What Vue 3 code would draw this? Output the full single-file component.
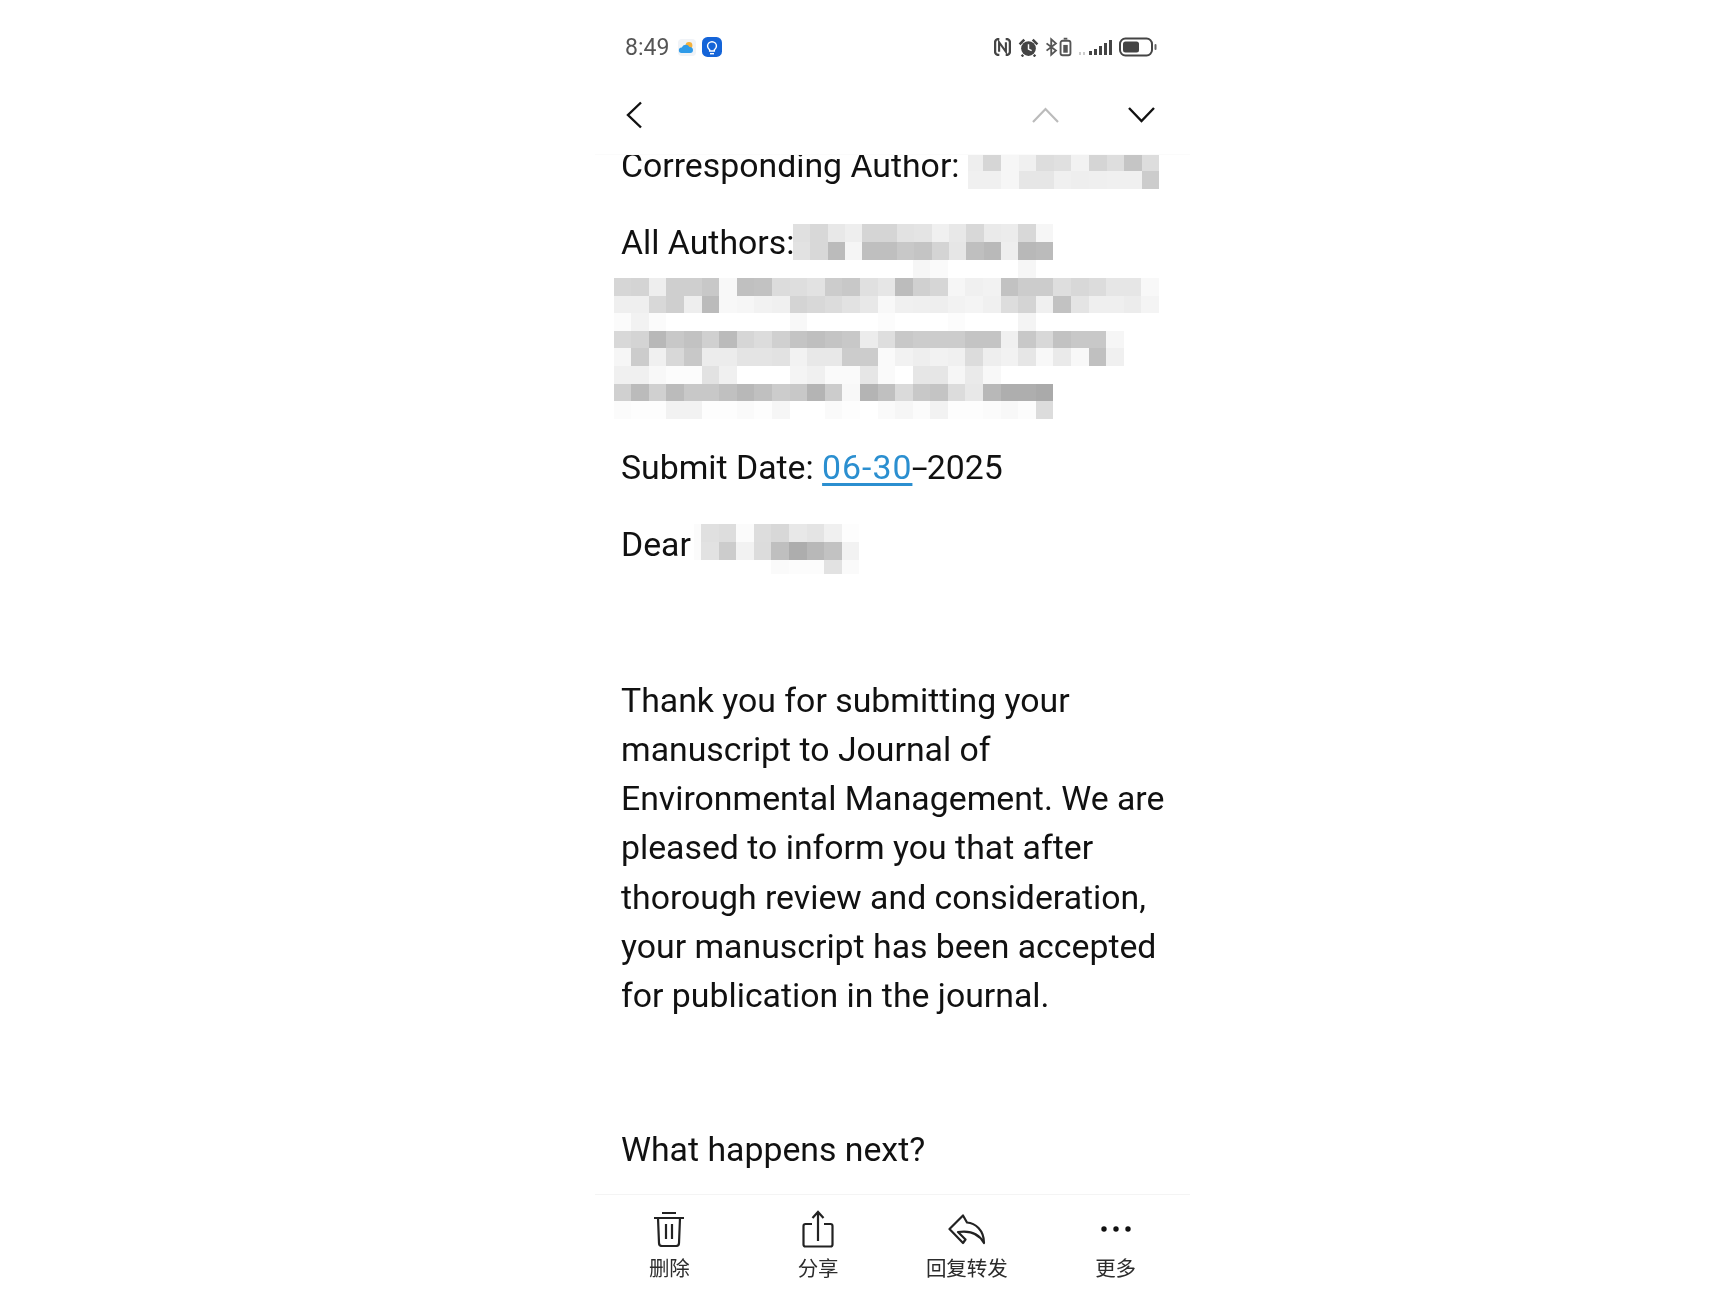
<script setup>
// pixelated (redacted) blocks, each token is a grey level
const parse = (rows) => rows.flatMap((r) => r.split(' ').map((v) => '#' + v + v + v))

const corrCells = parse([
  'ee d6 f6 f0 dd e0 f2 d5 de c5 dd',
  'f0 f0 f6 e6 e6 f0 ee ef f0 f0 cc'
])
const allAuthorCells = parse([
  'e0 d8 e8 ee d5 d5 e2 e4 f0 e8 d8 ea ec d8 f6',
  'e2 d8 bb f5 bf bf c8 c4 d4 e6 bf b9 ee b8 bb'
])
const authorCells = parse([
  'ff ff ff ff ff ff ff ff ff ff ff ff ff ff ff ff ff f6 fa ff ff ff ff f6 ff ff ff ff ff ff ff',
  'd6 d4 ee cf cf c8 f8 c0 c2 dc de e2 cc c8 e0 e6 bc d0 d6 f6 f0 f2 c2 cc cc de d8 dc e6 e6 f8',
  'ef ef d8 cf ee bb f8 f6 f2 f0 d4 d8 dc e2 e8 f8 f0 ef ee f2 f4 f0 dd d4 f0 c2 e4 ef ef ec f4',
  'fb f2 fb ff ff ff ff ff ff ff f8 ff ff ff ff fc ff ff ff fc ff ff ff f4 ff ff ff ff ff ff ff',
  'd8 d4 b8 c8 c2 d0 bb d6 dc d0 c4 bf c4 c8 ec de c8 cc cc cc c4 c4 f0 c8 d8 c2 c8 c8 f6 ff ff',
  'f6 cc f0 d8 c8 ec ec e4 e4 e2 f2 e8 e8 cc cc fa f2 ee f2 f0 dc ee f2 e6 f8 ea f8 c0 f0 ff ff',
  'f0 f0 f8 fc fc e2 f0 ff ff ff f4 f0 fa fa e6 fa ff e6 e6 f6 ea f8 ff ff ff ff ff ff ff ff ff',
  'd0 bb d0 bb c8 c8 c0 b8 c0 cc c8 b4 cc f8 b4 c0 da c8 c4 dc e8 b8 ae ae aa ff ff ff ff ff ff',
  'fb fd fd f2 f2 fd fd fa fd f6 ff ff fa fd ff fa f6 fb f2 fd fd fb f8 fc dc ff ff ff ff ff ff'
])
const dearCells = parse([
  'fb e0 dd fb dd d8 e8 e4 f0 fd',
  'fb e2 cc f2 dc bf ad b8 c2 f2',
  'ff ff ff ff ff fa fc fc e2 fa'
])

const actions = [
  { key: 'trash', label: '删除' },
  { key: 'share', label: '分享' },
  { key: 'reply', label: '回复转发' },
  { key: 'more', label: '更多' }
]
</script>

<template>
  <div class="phone">
    <header class="status">
      <div class="status-left">
        <span class="time">8:49</span>
        <svg class="weather" width="18" height="17" viewBox="0 0 18 17">
          <rect width="18" height="17" rx="4" fill="#f0f3f7" />
          <circle cx="11" cy="6.500" r="3.400" fill="#f4b13c" />
          <path d="M3.500 14a2.800 2.800 0 0 1 .3-5.600A4.200 4.200 0 0 1 11.500 8a3 3 0 0 1 3.500 3 3 3 0 0 1-2.800 3z" fill="#2f9be8" />
        </svg>
        <svg class="tips" width="20" height="20" viewBox="0 0 18 18">
          <rect width="18" height="18" rx="5" fill="#1464d8" />
          <path d="M6.900 11.600C5.800 10.800 5 9.700 5 8.200a4 4 0 0 1 8 0c0 1.500-.8 2.600-1.900 3.400v1H6.900z" fill="none" stroke="#fff" stroke-width="1.300" />
          <path d="M7.200 15h3.600" stroke="#fff" stroke-width="1.300" />
        </svg>
      </div>
      <div class="status-right">
        <svg width="17" height="18" viewBox="0 0 16 17" fill="none" stroke="#444">
          <path d="M5 1H4a3 3 0 0 0-3 3v9a3 3 0 0 0 3 3h1M11 1h1a3 3 0 0 1 3 3v9a3 3 0 0 1-3 3h-1" stroke-width="2.200" />
          <path d="M4.800 13V4l6.400 9V4" stroke-width="2" />
        </svg>
        <svg class="s-alarm" width="21" height="19" viewBox="0 0 20 18" fill="none">
          <circle cx="10" cy="10" r="7" fill="#444" />
          <path d="M10 6v4.500l3 1.500" stroke="#fff" stroke-width="1.400" />
          <path d="M1.500 6 6 1.500M18.500 6 14 1.500M5 16l-1.500 1.500M15 16l1.500 1.500" stroke="#444" stroke-width="2.400" />
        </svg>
        <svg class="s-bt" width="27" height="20" viewBox="0 0 26 18" fill="none" stroke="#555">
          <path d="M1.500 5.500l9 7-4.500 4V1.500l4.500 4-9 7" stroke-width="1.800" />
          <rect x="15" y="3" width="9.500" height="14" rx="2" stroke-width="1.800" />
          <path d="M18 1h3.500" stroke-width="1.800" />
          <rect x="17.600" y="7" width="4.300" height="7.500" fill="#555" stroke="none" />
        </svg>
        <svg class="s-signal" width="33" height="17" viewBox="0 0 33 17" fill="#444">
          <rect x="0" y="13" width="2" height="3" fill="#ccc" />
          <rect x="4" y="13" width="2" height="3" fill="#ccc" />
          <rect x="10" y="12" width="3" height="4" />
          <rect x="15" y="10" width="3" height="6" />
          <rect x="20" y="7" width="3" height="9" />
          <rect x="25" y="4" width="3" height="12" />
          <rect x="30" y="1" width="3" height="15" />
        </svg>
        <svg class="s-batt" width="38" height="20" viewBox="0 0 38 20" fill="none">
          <rect x="1" y="1.500" width="32" height="17" rx="5.500" stroke="#444" stroke-width="2" />
          <rect x="4" y="4.500" width="16" height="11" rx="2.500" fill="#444" />
          <rect x="35.500" y="7" width="2" height="6" rx="1" fill="#666" />
        </svg>
      </div>
    </header>

    <nav class="nav">
      <svg width="16" height="28" viewBox="0 0 16 28" fill="none" stroke="#111" stroke-width="2.400">
        <path d="M15 1.500 2 14l13 12.500" />
      </svg>
      <div class="nav-arrows">
        <svg width="27" height="16" viewBox="0 0 27 16" fill="none" stroke="#bbb" stroke-width="2.200">
          <path d="M1 15 13.500 2 26 15" />
        </svg>
        <svg width="27" height="16" viewBox="0 0 27 16" fill="none" stroke="#111" stroke-width="2.400">
          <path d="M1 1l12.500 13L26 1" />
        </svg>
      </div>
    </nav>

    <main class="body">
      <div class="mail">
        <div class="line-row">
          <span class="corr-label">Corresponding Author:</span>
          <div class="mosaic mosaic-corr">
            <i v-for="(c, i) in corrCells" :key="i" :style="{ background: c }"></i>
          </div>
        </div>

        <div class="line-row authors-row">
          <span class="all-label">All Authors:</span>
          <div class="mosaic mosaic-all">
            <i v-for="(c, i) in allAuthorCells" :key="i" :style="{ background: c }"></i>
          </div>
        </div>
        <div class="mosaic mosaic-authors">
          <i v-for="(c, i) in authorCells" :key="i" :style="{ background: c }"></i>
        </div>

        <p class="submit">Submit Date: <a class="date-link">06-30</a><span class="dash">-</span>2025</p>

        <div class="line-row dear-row">
          <span class="dear-label">Dear</span>
          <div class="mosaic mosaic-dear">
            <i v-for="(c, i) in dearCells" :key="i" :style="{ background: c }"></i>
          </div>
        </div>

        <p class="thanks">
          Thank you for submitting your<br />
          manuscript to Journal of<br />
          Environmental Management. We are<br />
          pleased to inform you that after<br />
          thorough review and consideration,<br />
          your manuscript has been accepted<br />
          for publication in the journal.
        </p>

        <p class="next">What happens next?</p>
      </div>
    </main>

    <footer class="toolbar">
      <div v-for="a in actions" :key="a.key" class="action">
        <div class="action-icon">
          <svg v-if="a.key === 'trash'" width="32" height="36" viewBox="0 0 32 36" fill="none" stroke="#222" stroke-width="2.200">
            <path d="M9 2h14M1 7h30M5 7l1 25a3 3 0 0 0 3 3h14a3 3 0 0 0 3-3l1-25M13 13v15M19 13v15" />
          </svg>
          <svg v-else-if="a.key === 'share'" width="32" height="38" viewBox="0 0 32 38" fill="none" stroke="#222" stroke-width="2.200">
            <path d="M10 14H3.500a2 2 0 0 0-2 2v18.500a2 2 0 0 0 2 2h25a2 2 0 0 0 2-2V16a2 2 0 0 0-2-2H22M16 31V2M10.500 8 16 2l5.500 6" />
          </svg>
          <svg v-else-if="a.key === 'reply'" width="38" height="31" viewBox="0 0 38 31" fill="none" stroke="#222" stroke-width="2.200" stroke-linejoin="round">
            <path d="M15 1.500 1.500 15 15 29l2.500-3.500L10 18c10-1.500 20-.5 26 11 0-13-9-20-17-20.500L15 1.500z" />
          </svg>
          <svg v-else width="32" height="8" viewBox="0 0 32 8" fill="#111">
            <circle cx="4" cy="4" r="2.700" />
            <circle cx="16" cy="4" r="2.700" />
            <circle cx="28" cy="4" r="2.700" />
          </svg>
        </div>
        <span class="action-label">{{ a.label }}</span>
      </div>
    </footer>
  </div>
</template>

<style scoped>
.phone {
  width: 595px;
  height: 1296px;
  margin-left: 595px;
  display: flex;
  flex-direction: column;
  overflow: hidden;
  background: #fff;
  color: #111;
  font-family: Roboto, "Noto Sans CJK SC", sans-serif;
  filter: blur(0.4px);
}

.status {
  height: 77px;
  padding: 17px 33px 0 30px;
  box-sizing: border-box;
  display: flex;
  align-items: center;
  justify-content: space-between;
  flex: none;
}

.status-left,
.status-right {
  display: flex;
  align-items: center;
}

.time {
  font-size: 23px;
  line-height: 1;
  color: #555;
  margin: 1px 9px 0 0;
}

.tips {
  margin-left: 6px;
}

.s-alarm {
  margin-left: 7px;
}

.s-bt {
  margin-left: 6px;
}

.s-signal {
  margin-left: 7px;
}

.s-batt {
  margin-left: 7px;
}

.nav {
  height: 78px;
  flex: none;
  padding: 0 35px 2px 31px;
  box-sizing: border-box;
  display: flex;
  align-items: center;
  justify-content: space-between;
  border-bottom: 1px solid #fbfbfb;
}

.nav-arrows {
  display: flex;
  align-items: center;
  gap: 69px;
}

.body {
  flex: 1;
  min-height: 0;
  overflow: hidden;
}

.mail {
  margin-top: -14px;
  padding-left: 26px;
  font-size: 33.800px;
  line-height: 49.3px;
  white-space: nowrap;
}

.mail p {
  margin: 0;
}

.line-row {
  display: flex;
  align-items: flex-start;
}

.mosaic {
  display: grid;
  flex: none;
}

.mosaic i {
  display: block;
}

.corr-label {
  width: 342px;
}

.mosaic-corr {
  margin: 12.600px 0 0 5px;
  grid-template-columns: 15.400px repeat(10, 17.600px);
  grid-auto-rows: 17.600px;
}

.authors-row {
  height: 42.600px;
  margin-top: 27.500px;
}

.all-label {
  width: 172px;
}

.mosaic-all {
  margin: 6.600px 0 0 0;
  grid-template-columns: repeat(15, 17.350px);
  grid-auto-rows: 17.600px;
}

.mosaic-authors {
  margin-left: -7.400px;
  grid-template-columns: repeat(31, 17.600px);
  grid-auto-rows: 17.600px;
}

.submit {
  padding-top: 24px;
}

.date-link {
  color: #2b8fd0;
  letter-spacing: 1px;
  text-decoration: underline;
  text-underline-offset: 4px;
}

.dash {
  display: inline-block;
  margin: 0 2.500px;
  transform: scaleX(1.7);
}

.dear-row {
  margin-top: 27.700px;
}

.dear-label {
  width: 72.600px;
}

.mosaic-dear {
  margin: 4.600px 0 0 0;
  grid-template-columns: 7.500px repeat(9, 17.600px);
  grid-template-rows: 17.600px 17.600px 14px;
}

.mail .thanks {
  margin-top: 102px;
}

.mail .next {
  margin-top: 104px;
}

.toolbar {
  height: 102px;
  flex: none;
  box-sizing: border-box;
  border-top: 1px solid #f4f4f4;
  display: grid;
  grid-template-columns: repeat(4, 1fr);
  padding-top: 15px;
}

.action {
  display: flex;
  flex-direction: column;
  align-items: center;
}

.action-icon {
  height: 38px;
  display: flex;
  align-items: center;
  justify-content: center;
}

.action-label {
  margin-top: 6px;
  font-size: 20.500px;
  line-height: 26px;
  color: #2c2c2c;
  font-family: "Noto Sans CJK SC", sans-serif;
}
</style>

<style>
html,
body {
  background: #fff;
}
</style>
